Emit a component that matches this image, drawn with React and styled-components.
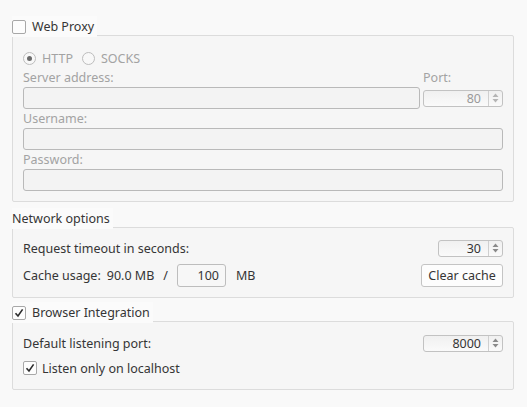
import React from 'react'
import styled, { createGlobalStyle } from 'styled-components'

const GlobalStyle = createGlobalStyle`
  html, body {
    margin: 0;
    padding: 0;
    background: #f9f9f9;
  }
  body {
    font-family: "Noto Sans", "DejaVu Sans", sans-serif;
    font-size: 12.5px;
    color: #353535;
  }
`

const Page = styled.div`
  width: 527px;
  height: 407px;
  box-sizing: border-box;
  padding: 16px 13px 0 12px;
  display: flex;
  flex-direction: column;
`

const Group = styled.div`
  display: flex;
  flex-direction: column;
  margin-top: ${p => p.$gap || 0}px;
`

const Title = styled.div`
  align-self: flex-start;
  display: flex;
  align-items: center;
  gap: 6px;
  height: 21px;
  padding-right: 3px;
  background: #fbfbfb;
  position: relative;
  z-index: 1;
  margin-bottom: -2px;
`

const Frame = styled.div`
  border: 1px solid #dcdcdc;
  border-radius: 2px;
  background: #f6f6f6;
  padding: ${p => p.$pad};
  display: flex;
  flex-direction: column;
`

const Box = styled.span`
  width: 14px;
  height: 14px;
  box-sizing: border-box;
  border: 1px solid #a8a8a8;
  border-radius: 2px;
  background: #fdfdfd;
  display: inline-flex;
  align-items: center;
  justify-content: center;
  flex: none;
`

const Check = ({ on }) => (
  <Box>
    {on && (
      <svg width="10" height="10" viewBox="0 0 10 10">
        <path d="M1.5 5.2 L4 8 L8.6 1.4" fill="none" stroke="#2b2b2b" strokeWidth="1.6" />
      </svg>
    )}
  </Box>
)

const RadioRow = styled.div`
  display: flex;
  align-items: center;
  height: 20px;
  color: #a3a3a3;
`

const RadioCircle = styled.span`
  width: 13px;
  height: 13px;
  box-sizing: border-box;
  border: 1px solid #bdbdbd;
  border-radius: 50%;
  background: #f8f8f8;
  display: inline-flex;
  align-items: center;
  justify-content: center;
  margin-right: 6px;
  margin-left: ${p => p.$ml || 0}px;
  &::after {
    content: '';
    display: ${p => (p.$on ? 'block' : 'none')};
    width: 5px;
    height: 5px;
    border-radius: 50%;
    background: #6a6a6a;
  }
`

const Label = styled.div`
  height: 19px;
  display: flex;
  align-items: center;
  color: ${p => (p.$disabled ? '#a3a3a3' : 'inherit')};
`

const FieldRow = styled.div`
  display: grid;
  grid-template-columns: 1fr 80px;
  column-gap: 3px;
`

const Field = styled.div`
  height: 22px;
  box-sizing: border-box;
  border: 1px solid #b9b9b9;
  border-radius: 3px;
  background: #f3f3f3;
`

const PortCell = styled.div`
  display: flex;
  align-items: center;
`

const Spin = styled.div`
  width: ${p => p.$w}px;
  height: 17px;
  box-sizing: border-box;
  border: 1px solid #c2c2c2;
  border-radius: 3px;
  background: linear-gradient(#f0f0f0, #fafafa);
  display: flex;
  color: ${p => (p.$disabled ? '#9a9a9a' : '#353535')};
`

const SpinValue = styled.span`
  flex: 1;
  text-align: right;
  padding-right: 7px;
  line-height: 15px;
`

const SpinArrows = styled.span`
  width: 13px;
  border-left: 1px solid #cfcfcf;
  display: flex;
  align-items: center;
  justify-content: center;
`

const SpinBox = ({ value, w, disabled }) => (
  <Spin $w={w} $disabled={disabled}>
    <SpinValue>{value}</SpinValue>
    <SpinArrows>
      <svg width="7" height="10" viewBox="0 0 7 10">
        <path d="M3.5 0.5 L6.5 4 L0.5 4 Z M0.5 6 L6.5 6 L3.5 9.5 Z" fill={disabled ? '#b5b5b5' : '#8a8a8a'} />
      </svg>
    </SpinArrows>
  </Spin>
)

const Row = styled.div`
  display: flex;
  align-items: center;
  justify-content: space-between;
  height: ${p => p.$h}px;
`

const Inline = styled.div`
  display: flex;
  align-items: center;
`

const Gap = styled.span`
  display: inline-block;
  width: ${p => p.$w}px;
`

const NumberInput = styled.div`
  width: 49px;
  height: 23px;
  box-sizing: border-box;
  border: 1px solid #bdbdbd;
  border-radius: 3px;
  background: #f7f7f7;
  display: flex;
  align-items: center;
  justify-content: flex-end;
  padding-right: 6px;
`

const Button = styled.div`
  width: 82px;
  height: 23px;
  box-sizing: border-box;
  border: 1px solid #c4c4c4;
  border-radius: 3px;
  background: #fdfdfd;
  display: flex;
  align-items: center;
  justify-content: center;
`

export default function App() {
  return (
    <Page>
      <GlobalStyle />
      <Group>
        <Title>
          <Check />
          <span>Web Proxy</span>
        </Title>
        <Frame $pad="12px 10px 10px 10px">
          <RadioRow>
            <RadioCircle $on />
            HTTP
            <RadioCircle $ml={9} />
            SOCKS
          </RadioRow>
          <FieldRow>
            <Label $disabled>Server address:</Label>
            <Label $disabled>Port:</Label>
            <Field />
            <PortCell>
              <SpinBox value="80" w={80} disabled />
            </PortCell>
          </FieldRow>
          <Label $disabled>Username:</Label>
          <Field />
          <Label $disabled>Password:</Label>
          <Field />
        </Frame>
      </Group>

      <Group $gap={6}>
        <Title>
          <span>Network options</span>
        </Title>
        <Frame $pad="9px 10px 5px 10px">
          <Row $h={22}>
            <span>Request timeout in seconds:</span>
            <SpinBox value="30" w={65} />
          </Row>
          <Row $h={33}>
            <Inline>
              <span>Cache usage:</span>
              <Gap $w={6} />
              <span>90.0 MB</span>
              <Gap $w={9} />
              <span>/</span>
              <Gap $w={9} />
              <NumberInput>100</NumberInput>
              <Gap $w={10} />
              <span>MB</span>
            </Inline>
            <Button>Clear cache</Button>
          </Row>
        </Frame>
      </Group>

      <Group $gap={4}>
        <Title>
          <Check on />
          <span>Browser Integration</span>
        </Title>
        <Frame $pad="10px 10px 7px 10px">
          <Row $h={22}>
            <span>Default listening port:</span>
            <SpinBox value="8000" w={80} />
          </Row>
          <Row $h={28}>
            <Inline>
              <Check on />
              <Gap $w={5} />
              <span>Listen only on localhost</span>
            </Inline>
          </Row>
        </Frame>
      </Group>
    </Page>
  )
}
